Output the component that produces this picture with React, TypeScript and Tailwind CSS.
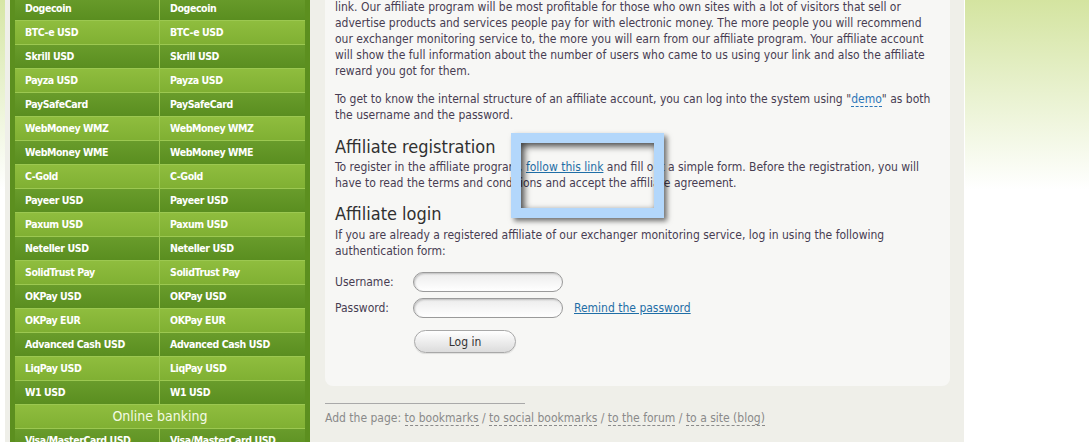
import React from "react";

// ======= Dados da barra lateral =======
const currencies = [
  "Dogecoin",
  "BTC-e USD",
  "Skrill USD",
  "Payza USD",
  "PaySafeCard",
  "WebMoney WMZ",
  "WebMoney WME",
  "C-Gold",
  "Payeer USD",
  "Paxum USD",
  "Neteller USD",
  "SolidTrust Pay",
  "OKPay USD",
  "OKPay EUR",
  "Advanced Cash USD",
  "LiqPay USD",
  "W1 USD",
];

const Row = ({ name, light }: { name: string; light: boolean }) => (
  <div
    className={
      light
        ? "flex h-6 border-t border-[#9cc851] bg-linear-to-b from-[#8fbd3e] to-[#80b033]"
        : "flex h-6 border-t border-[#9cc851] bg-linear-to-b from-[#699c2b] to-[#5a8e20]"
    }
  >
    <div className="flex w-[145px] items-center border-r border-[#9cc851] pl-[10px]">{name}</div>
    <div className="flex flex-1 items-center pl-[10px]">{name}</div>
  </div>
);

const Sidebar = () => (
  <div className="-mt-[4px] w-[300px] shrink-0 border-x-[5px] border-[#5c8f1f] bg-[#5c8f1f] text-[10.5px] font-bold tracking-[-0.4px] text-white">
    {currencies.map((c, i) => (
      <Row key={c} name={c} light={i % 2 === 1} />
    ))}
    <div className="flex h-6 items-center justify-center border-t border-[#9cc851] bg-linear-to-b from-[#8fbd3e] to-[#80b033] text-[14px] font-normal tracking-normal text-[#f3fae4]">
      Online banking
    </div>
    <Row name="Visa/MasterCard USD" light={false} />
  </div>
);

// ======= Conteúdo principal =======
const Dashed = ({ children }: { children: React.ReactNode }) => (
  <span className="border-b border-dashed border-current">{children}</span>
);

const Content = () => (
  <div className="ml-[15px] w-[625px] shrink-0">
    <div className="relative -mt-px rounded-b-[8px] bg-[#f7f7f5] px-[10px] pb-[33px] text-[12px] leading-[16px] text-[#473d52]">
      <p className="whitespace-nowrap">
        link. Our affiliate program will be most profitable for those who own sites with a lot of visitors that sell or
        <br />
        advertise products and services people pay for with electronic money. The more people you will recommend
        <br />
        our exchanger monitoring service to, the more you will earn from our affiliate program. Your affiliate account
        <br />
        will show the full information about the number of users who came to us using your link and also the affiliate
        <br />
        reward you got for them.
      </p>
      <p className="mt-[12px] whitespace-nowrap">
        To get to know the internal structure of an affiliate account, you can log into the system using "
        <span className="text-[#2b76b8]">
          <Dashed>demo</Dashed>
        </span>
        " as both
        <br />
        the username and the password.
      </p>

      <h2 className="mt-[13px] text-[18px] leading-[22px] text-[#303030]">Affiliate registration</h2>
      <p className="mt-px whitespace-nowrap">
        To register in the affiliate program,{" "}
        <a className="text-[#1f6ea6] underline">follow this link</a> and fill out a simple form. Before the
        registration, you will
        <br />
        have to read the terms and conditions and accept the affiliate agreement.
      </p>

      <h2 className="mt-[12px] text-[18px] leading-[22px] text-[#303030]">Affiliate login</h2>
      <p className="mt-[2px] whitespace-nowrap">
        If you are already a registered affiliate of our exchanger monitoring service, log in using the following
        <br />
        authentication form:
      </p>

      <div className="mt-[13px] flex flex-col gap-[6px]">
        <div className="flex items-center">
          <span className="w-[78px]">Username:</span>
          <div className="h-[20px] w-[150px] rounded-full border border-[#9a9a9a] bg-linear-to-b from-[#ececec] to-white shadow-[inset_1px_1px_2px_rgba(0,0,0,0.2)]" />
        </div>
        <div className="flex items-center">
          <span className="w-[78px]">Password:</span>
          <div className="h-[20px] w-[150px] rounded-full border border-[#9a9a9a] bg-linear-to-b from-[#ececec] to-white shadow-[inset_1px_1px_2px_rgba(0,0,0,0.2)]" />
          <a className="ml-[11px] text-[#1f6ea6] underline">Remind the password</a>
        </div>
      </div>
      <button className="ml-[79px] mt-[12px] h-[23px] w-[102px] rounded-full border border-[#a8a8a8] bg-linear-to-b from-white to-[#dcdcdc] text-[12px] text-[#333] shadow-[0_1px_1px_rgba(0,0,0,0.1)]">
        Log in
      </button>

      {/* destaque azul por cima do link */}
      <div className="pointer-events-none absolute left-[186px] top-[134px] h-[85px] w-[153px] border-[10px] border-[#b3d7fb] shadow-[3px_3px_5px_rgba(0,0,0,0.55),inset_3px_3px_7px_rgba(0,0,0,0.75)]" />
    </div>

    <div className="mt-[17px] h-px w-[200px] bg-[#a9a9a9]" />
    <p className="mt-[6px] whitespace-nowrap text-[12px] leading-[16px] text-[#8a8a8a]">
      Add the page: <Dashed>to bookmarks</Dashed> / <Dashed>to social bookmarks</Dashed> /{" "}
      <Dashed>to the forum</Dashed> / <Dashed>to a site (blog)</Dashed>
    </p>
  </div>
);

export default function App() {
  return (
    <div className="flex h-[442px] w-full overflow-hidden bg-white font-['DejaVu_Sans_Condensed','DejaVu_Sans',sans-serif]">
      <div className="w-[5px] shrink-0">
        <div className="h-[190px] bg-linear-to-b from-[#d6e6a4] to-white" />
      </div>
      <div className="flex w-[959px] shrink-0 bg-[#efefe9] pl-[5px]">
        <Sidebar />
        <Content />
      </div>
      <div className="flex-1 border-l border-white">
        <div className="h-[190px] bg-linear-to-b from-[#d4e4a0] to-white" />
      </div>
    </div>
  );
}
